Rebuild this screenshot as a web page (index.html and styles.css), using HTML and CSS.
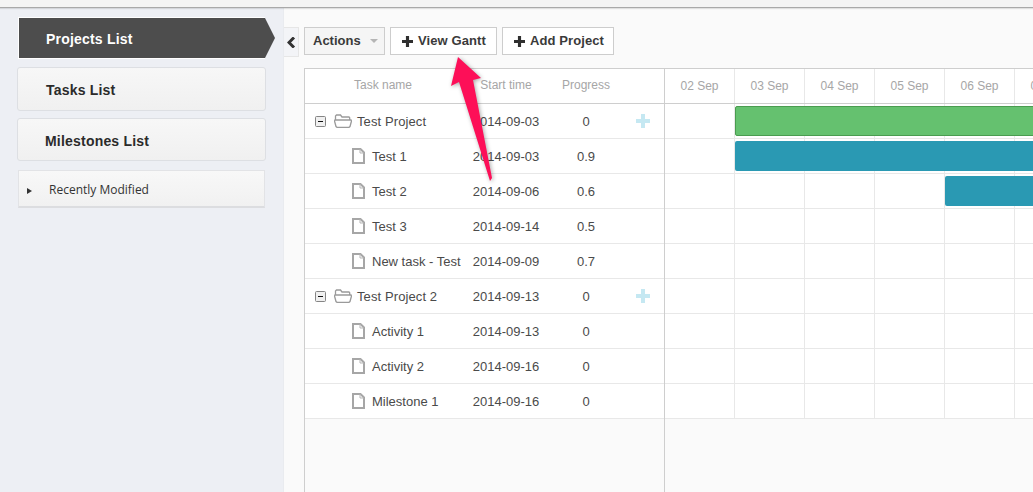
FILE: index.html
```html
<!DOCTYPE html>
<html lang="en">
<head>
  <meta charset="UTF-8">
  <meta name="viewport" content="width=device-width, initial-scale=1.0">
  <title>Projects List</title>
  <link rel="stylesheet" href="styles.css">
</head>
<body>
  <svg class="sprites" width="0" height="0">
    <symbol id="i-minus" viewBox="0 0 11 11">
      <rect x="0.5" y="0.5" width="10" height="10" rx="1" fill="#f0f0f0" stroke="#858585"/>
      <rect x="3" y="5" width="5" height="1" fill="#111"/>
    </symbol>
    <symbol id="i-folder" viewBox="0 0 18 14">
      <path d="M1.5 6.5V2L2.5 1H6.5L8 3H15L15.7 3.7V6.5" fill="#fff" stroke="#9a9a9a" stroke-width="1.3"/>
      <path d="M1 6H17L17.5 7L16 12.5L15 13.3H3L2 12.5L0.5 7Z" fill="#fff" stroke="#9a9a9a" stroke-width="1.3"/>
    </symbol>
    <symbol id="i-doc" viewBox="0 0 13 16">
      <path d="M1 1H8.5L12 4.5V15H1Z" fill="#fff" stroke="#a6a6a6" stroke-width="2"/>
      <path d="M8 1V5H12" fill="none" stroke="#b5b5b5" stroke-width="1"/>
    </symbol>
    <symbol id="i-plus" viewBox="0 0 14 14">
      <path d="M5 0H9V5H14V9H9V14H5V9H0V5H5Z" fill="currentColor"/>
    </symbol>
  </svg>

  <div class="topbar"></div>

  <div class="layout">
    <nav class="sidebar">
      <a class="nav-item nav-active">Projects List</a>
      <a class="nav-item nav-tasks">Tasks List</a>
      <a class="nav-item nav-miles">Milestones List</a>
      <a class="nav-recent"><span class="recent-arrow"></span>Recently Modified</a>
    </nav>

    <main class="content">
      <div class="collapse-tab">
        <svg width="9" height="11" viewBox="0 0 9 11"><path d="M7 0.5L2 5.5L7 10.5" fill="none" stroke="#333" stroke-width="3"/></svg>
      </div>

      <div class="panel">
        <div class="toolbar">
          <button class="btn btn-actions">Actions <span class="caret"></span></button>
          <button class="btn btn-view"><svg class="btn-plus"><use href="#i-plus"/></svg>View Gantt</button>
          <button class="btn btn-add"><svg class="btn-plus"><use href="#i-plus"/></svg>Add Project</button>
        </div>

        <div class="gantt">
          <div class="grid">
            <div class="grid-head">
              <div class="col-name">Task name</div>
              <div class="col-start">Start time</div>
              <div class="col-prog">Progress</div>
              <div class="col-add"></div>
            </div>

            <div class="row">
              <div class="col-name cell-project"><svg class="ic-minus"><use href="#i-minus"/></svg><svg class="ic-folder"><use href="#i-folder"/></svg>Test Project</div>
              <div class="col-start">2014-09-03</div>
              <div class="col-prog">0</div>
              <div class="col-add"><svg class="ic-add"><use href="#i-plus"/></svg></div>
            </div>
            <div class="row">
              <div class="col-name cell-task"><svg class="ic-doc"><use href="#i-doc"/></svg>Test 1</div>
              <div class="col-start">2014-09-03</div>
              <div class="col-prog">0.9</div>
              <div class="col-add"></div>
            </div>
            <div class="row">
              <div class="col-name cell-task"><svg class="ic-doc"><use href="#i-doc"/></svg>Test 2</div>
              <div class="col-start">2014-09-06</div>
              <div class="col-prog">0.6</div>
              <div class="col-add"></div>
            </div>
            <div class="row">
              <div class="col-name cell-task"><svg class="ic-doc"><use href="#i-doc"/></svg>Test 3</div>
              <div class="col-start">2014-09-14</div>
              <div class="col-prog">0.5</div>
              <div class="col-add"></div>
            </div>
            <div class="row">
              <div class="col-name cell-task"><svg class="ic-doc"><use href="#i-doc"/></svg>New task - Test</div>
              <div class="col-start">2014-09-09</div>
              <div class="col-prog">0.7</div>
              <div class="col-add"></div>
            </div>
            <div class="row">
              <div class="col-name cell-project"><svg class="ic-minus"><use href="#i-minus"/></svg><svg class="ic-folder"><use href="#i-folder"/></svg>Test Project 2</div>
              <div class="col-start">2014-09-13</div>
              <div class="col-prog">0</div>
              <div class="col-add"><svg class="ic-add"><use href="#i-plus"/></svg></div>
            </div>
            <div class="row">
              <div class="col-name cell-task"><svg class="ic-doc"><use href="#i-doc"/></svg>Activity 1</div>
              <div class="col-start">2014-09-13</div>
              <div class="col-prog">0</div>
              <div class="col-add"></div>
            </div>
            <div class="row">
              <div class="col-name cell-task"><svg class="ic-doc"><use href="#i-doc"/></svg>Activity 2</div>
              <div class="col-start">2014-09-16</div>
              <div class="col-prog">0</div>
              <div class="col-add"></div>
            </div>
            <div class="row">
              <div class="col-name cell-task"><svg class="ic-doc"><use href="#i-doc"/></svg>Milestone 1</div>
              <div class="col-start">2014-09-16</div>
              <div class="col-prog">0</div>
              <div class="col-add"></div>
            </div>
          </div>

          <div class="timeline">
            <div class="time-head">
              <div class="day">02 Sep</div>
              <div class="day">03 Sep</div>
              <div class="day">04 Sep</div>
              <div class="day">05 Sep</div>
              <div class="day">06 Sep</div>
              <div class="day">07 Sep</div>
            </div>
            <div class="time-row"><div class="bar bar-project" style="margin-left: 70px"></div></div>
            <div class="time-row"><div class="bar bar-task" style="margin-left: 70px"></div></div>
            <div class="time-row"><div class="bar bar-task" style="margin-left: 280px"></div></div>
            <div class="time-row"></div>
            <div class="time-row"></div>
            <div class="time-row"></div>
            <div class="time-row"></div>
            <div class="time-row"></div>
            <div class="time-row"></div>
          </div>
        </div>
      </div>
    </main>
  </div>

  <svg class="callout" width="60" height="140" viewBox="0 0 60 140">
    <path d="M18 7L41 28L33 30L52 128L50 131L19 32L11 36Z" fill="#fd0f58"/>
  </svg>
</body>
</html>
```

FILE: styles.css
```css
* { box-sizing: border-box; }

html, body { height: 100%; }

body {
  margin: 0;
  overflow: hidden;
  position: relative;
  background: #fafafa;
  font-family: "Liberation Sans", Arial, sans-serif;
  font-size: 13px;
  color: #4a4a4a;
}

.sprites { position: absolute; }

.topbar {
  position: relative;
  height: 8px;
  background: #f4f4f4;
  border-bottom: 1px solid #a9a9a9;
  box-shadow: 0 1px 1px rgba(0, 0, 0, 0.1);
}

.layout { display: flex; height: 484px; }

/* sidebar */
.sidebar {
  width: 284px;
  flex: none;
  background: #edeff4;
  border-right: 1px solid #e9ebef;
  padding-top: 9px;
}

.nav-item {
  display: flex;
  align-items: center;
  margin-left: 17px;
  width: 249px;
  height: 44px;
  margin-bottom: 7px;
  padding: 2px 0 0 28px;
  font-size: 14px;
  font-weight: 700;
  letter-spacing: 0.2px;
  color: #2b2b2b;
  background: linear-gradient(#f7f7f7, #f0f0f0);
  border: 1px solid #dddfe3;
  border-radius: 3px;
}

.nav-active {
  position: relative;
  margin-left: 18px;
  width: 247px;
  height: 42px;
  margin-bottom: 8px;
  padding-left: 27px;
  color: #fff;
  background: #4d4d4d;
  border: 1px solid #fff;
  border-right: 0;
  border-radius: 0;
}

.nav-active::after {
  content: "";
  position: absolute;
  left: 246px;
  top: 0;
  width: 10px;
  height: 40px;
  background: #4d4d4d;
  clip-path: polygon(0 0, 100% 50%, 0 100%);
}

.nav-miles { padding-left: 27px; height: 43px; margin-bottom: 9px; }

.nav-recent {
  display: flex;
  align-items: center;
  margin-left: 18px;
  width: 247px;
  height: 38px;
  padding-top: 2px;
  font-family: "Open Sans", sans-serif;
  font-size: 12px;
  color: #333;
  background: linear-gradient(#f8f8f8, #f1f1f1);
  border: 1px solid #e2e3e6;
  border-bottom: 2px solid #dcdde0;
}

.recent-arrow {
  width: 0;
  height: 0;
  margin: 2px 17px 0 8px;
  border-left: 5px solid #333;
  border-top: 3px solid transparent;
  border-bottom: 3px solid transparent;
}

/* main */
.content { flex: 1; display: flex; min-width: 0; }

.collapse-tab {
  flex: none;
  width: 15px;
  height: 30px;
  margin-top: 19px;
  display: flex;
  align-items: center;
  justify-content: center;
  background: #f3f4f7;
  border: 1px solid #e6e6e6;
  border-left: 0;
}

.panel {
  flex: 1;
  min-width: 0;
  margin-left: 5px;
  display: flex;
  flex-direction: column;
}

.toolbar { display: flex; gap: 5px; padding-top: 19px; height: 60px; }

.btn {
  display: flex;
  align-items: center;
  height: 28px;
  padding: 0 10px 2px;
  font-family: "Liberation Sans", Arial, sans-serif;
  font-size: 13px;
  font-weight: 700;
  white-space: nowrap;
  color: #3a3a3a;
  background: #fff;
  border: 1px solid #cdcdcd;
}

.btn-actions { width: 81px; padding: 0 8px 2px; background: #f5f5f5; }
.btn-view { width: 107px; padding-left: 11px; letter-spacing: 0.1px; }
.btn-add { width: 112px; padding-left: 11px; letter-spacing: 0.1px; }

.caret {
  width: 0;
  height: 0;
  margin-left: 9px;
  margin-top: 2px;
  border-top: 4px solid #b5b5b5;
  border-left: 4px solid transparent;
  border-right: 4px solid transparent;
}

.btn-plus { width: 11px; height: 11px; flex: none; margin: 2px 5px 0 0; color: #2f2f2f; }

/* gantt */
.gantt {
  flex: 1;
  display: flex;
  min-height: 0;
  border-top: 1px solid #cecece;
  border-left: 1px solid #cecece;
}

.grid { width: 360px; flex: none; border-right: 1px solid #cecece; }

.grid-head, .time-head {
  display: flex;
  height: 35px;
  align-items: center;
  background: #fff;
  border-bottom: 1px solid #cecece;
  font-size: 12px;
  color: #a6a6a6;
}

.grid-head { padding-bottom: 2px; }

.row {
  display: flex;
  height: 35px;
  align-items: center;
  background: #fff;
  border-bottom: 1px solid #e8e8e8;
}

.col-name { width: 156px; flex: none; text-align: center; overflow: hidden; white-space: nowrap; }
.col-start { width: 90px; flex: none; text-align: center; }
.col-prog { width: 70px; flex: none; text-align: center; }
.col-add { flex: 1; display: flex; justify-content: center; }

.cell-project, .cell-task { display: flex; align-items: center; text-align: left; }
.cell-project { padding-left: 10px; letter-spacing: 0.1px; }
.cell-task { padding-left: 47px; }

.ic-minus { width: 11px; height: 11px; margin-right: 8px; }
.ic-folder { width: 18px; height: 14px; margin-right: 5px; }
.ic-doc { width: 13px; height: 16px; margin-right: 7px; }
.ic-add { width: 14px; height: 14px; color: #c5e8f2; }

.timeline { flex: 1; min-width: 0; overflow: hidden; }

.time-head { width: 420px; }

.day {
  width: 70px;
  flex: none;
  height: 100%;
  line-height: 34px;
  text-align: center;
  border-right: 1px solid #e8e8e8;
}

.time-row {
  width: 420px;
  height: 35px;
  padding-top: 2px;
  background-color: #fff;
  background-image: repeating-linear-gradient(to right, transparent 0, transparent 69px, #e8e8e8 69px, #e8e8e8 70px);
  border-bottom: 1px solid #e8e8e8;
}

.bar { height: 30px; border-radius: 2px 0 0 2px; }
.bar-project { background: #65c16f; border: 1px solid #4a9c50; }
.bar-task { background: #2a99b3; }

.callout {
  position: absolute;
  left: 440px;
  top: 50px;
  filter: drop-shadow(1px 1px 2px rgba(0, 0, 0, 0.35));
}
```
